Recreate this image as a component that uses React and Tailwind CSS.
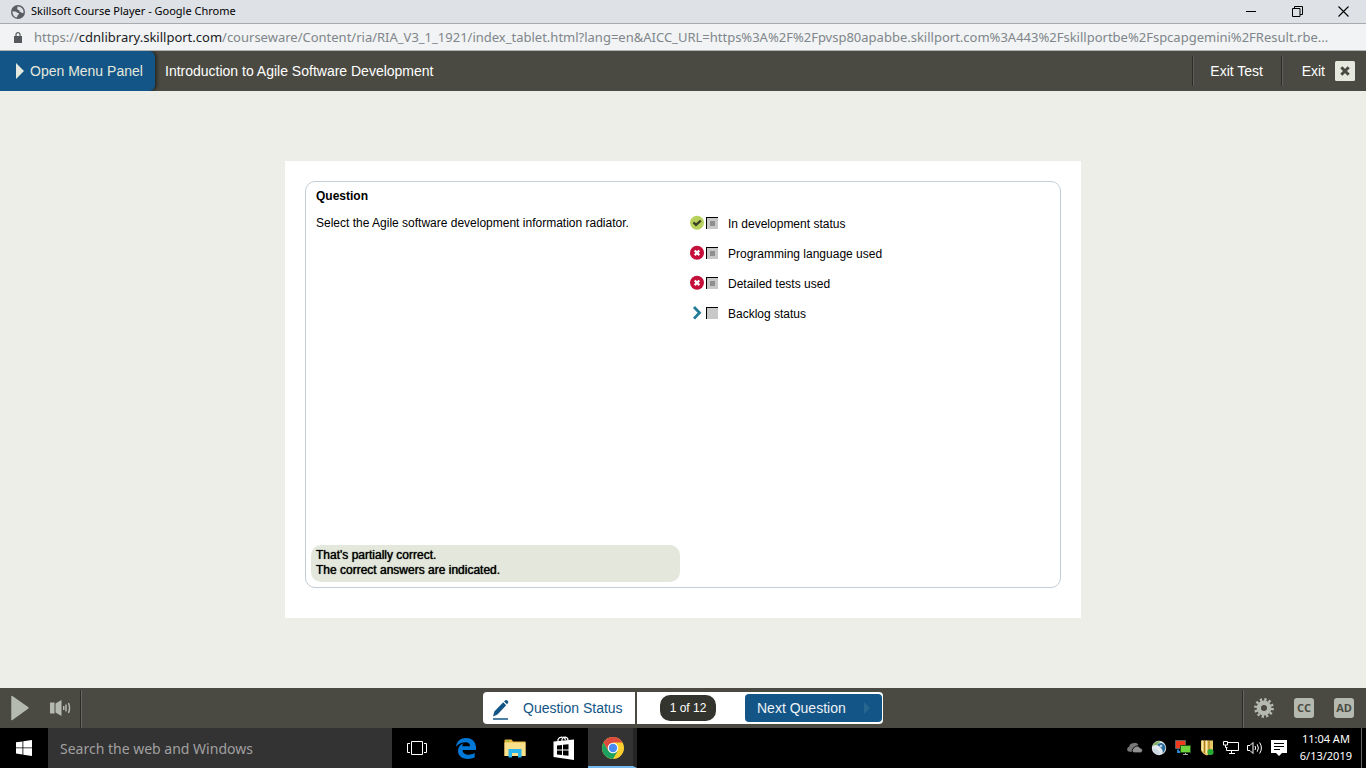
import React from 'react';

const arial = "font-['Liberation_Sans',Arial,sans-serif]";
const segoe = "font-['Noto_Sans','Open_Sans',sans-serif]";

const answers = [
  { id: 'a', label: 'In development status', mark: 'right', checked: true },
  { id: 'b', label: 'Programming language used', mark: 'wrong', checked: true },
  { id: 'c', label: 'Detailed tests used', mark: 'wrong', checked: true },
  { id: 'd', label: 'Backlog status', mark: 'missed', checked: false },
];

function Mark({ kind }) {
  if (kind === 'missed') {
    return (
      <svg className="h-4 w-4 shrink-0" viewBox="0 0 16 16" aria-hidden="true">
        <path d="M5 2 10.500 7.800 5 13.600" fill="none" stroke="#237c98" strokeWidth="2.800" />
      </svg>
    );
  }
  if (kind === 'right') {
    return (
      <svg className="h-4 w-4 shrink-0" viewBox="0 0 16 16" aria-hidden="true">
        <circle cx="8" cy="7.800" r="7" fill="#b7d25c" />
        <path d="M4.400 7.400 7 9.900 11.800 5.700" fill="none" stroke="#3a3f26" strokeWidth="2.300" />
      </svg>
    );
  }
  return (
    <svg className="h-4 w-4 shrink-0" viewBox="0 0 16 16" aria-hidden="true">
      <circle cx="8" cy="7.800" r="7" fill="#c4103a" />
      <path d="M5.700 5.500l4.600 4.600M10.300 5.500l-4.600 4.600" stroke="#fff" strokeWidth="2.300" />
    </svg>
  );
}

function BrowserChrome() {
  return (
    <header className={`${segoe} shrink-0`}>
      <div className="flex h-6 items-center border-b border-[#a9abae] bg-[#dee1e6] pl-[11px] text-black">
        <svg className="mr-1.5 h-3.5 w-3.5" viewBox="0 0 14 14" aria-hidden="true">
          <circle cx="7" cy="7" r="7" fill="#5a5d61" />
          <path d="M1.500 6.200c1.800.3 3.300 0 4.300 1 .7.900 1.800.5 2.300 1.300.2 1-1 1-1.400 1.800-.3.900-.4 1.600-1.200 2.200C3.200 12 1.300 9.600 1.500 6.200z" fill="#dee1e6" />
          <path d="M6.300 1.500c2.800-.2 5 1.400 6.100 3.900.2 1.300.1 2-.3 2.900-1.200-.1-1.600-1-2.700-1.200-1.200 0-1.300-1-.7-1.500-.5-.7-2.200-.4-2.500-1.500-.1-.9.700-1.600.1-2.600z" fill="#dee1e6" />
        </svg>
        <h1 className="flex-1 text-[11px]">Skillsoft Course Player - Google Chrome</h1>
        <button type="button" aria-label="Minimize" className="flex h-5 w-[46px] items-center justify-center">
          <svg className="h-[11px] w-[11px]" viewBox="0 0 11 11"><path d="M0 5.500h10" stroke="#000" /></svg>
        </button>
        <button type="button" aria-label="Restore" className="flex h-5 w-[46px] items-center justify-center">
          <svg className="h-[11px] w-[11px]" viewBox="0 0 11 11"><path d="M.5 2.500h7.500v8H.5zM2.500 2.500v-2h8v8H8" fill="none" stroke="#000" /></svg>
        </button>
        <button type="button" aria-label="Close" className="flex h-5 w-[46px] items-center justify-center">
          <svg className="h-[11px] w-[11px]" viewBox="0 0 11 11"><path d="M.5.5l10 10M10.500.5l-10 10" stroke="#000" strokeWidth="1.100" /></svg>
        </button>
      </div>
      <div className="flex h-[27px] items-center border-b border-[#b1b2b4] bg-[#f1f3f4] pl-3.5">
        <svg className="mr-3 h-[11px] w-2 shrink-0" viewBox="0 0 8 11" aria-hidden="true">
          <path d="M0 4h8v7H0z" fill="#55585c" />
          <path d="M2 4.500V2.600a2 2 0 0 1 4 0v1.900" fill="none" stroke="#55585c" strokeWidth="1.200" />
        </svg>
        <p className="mr-4 min-w-0 overflow-hidden pt-0.5 text-[13px] whitespace-nowrap text-[#80868b]">
          https://<span className="text-[#202124]">cdnlibrary.skillport.com</span>/courseware/Content/ria/RIA_V3_1_1921/index_tablet.html?lang=en&amp;AICC_URL=https%3A%2F%2Fpvsp80apabbe.skillport.com%3A443%2Fskillportbe%2Fspcapgemini%2FResult.rbe...
        </p>
      </div>
    </header>
  );
}

function CourseHeader() {
  return (
    <nav className="flex h-10 shrink-0 items-stretch overflow-hidden bg-[#4a4a42] text-sm text-white">
      <button type="button" className="flex w-[155px] items-center gap-1.5 rounded-r-md bg-[#135587] pl-4 text-[#e5e8dc] shadow-[2px_0_3px_#2a2a26]">
        <svg className="h-4 w-2" viewBox="0 0 8 16" aria-hidden="true"><path d="M0 0l8 8-8 8z" fill="#e5e8dc" /></svg>
        Open Menu Panel
      </button>
      <h2 className="flex flex-1 items-center pl-2.5">Introduction to Agile Software Development</h2>
      <div className="my-[5px] flex items-stretch">
        <button type="button" className="w-[89px] border-l border-[#2e2e29] shadow-[inset_1px_0_#5f5f58]">Exit Test</button>
        <button type="button" className="flex items-center gap-2.5 border-l border-[#2e2e29] pr-[11px] pl-5 shadow-[inset_1px_0_#5f5f58]">
          Exit
          <svg className="h-5 w-5" viewBox="0 0 20 20" aria-hidden="true">
            <rect width="20" height="20" rx="1.500" fill="#e5e8dc" />
            <path d="M6.300 6.300l7.400 7.400M13.700 6.300l-7.400 7.400" stroke="#4a4a42" strokeWidth="3" />
          </svg>
        </button>
      </div>
    </nav>
  );
}

function QuestionCard() {
  return (
    <section className="flex min-h-[457px] w-full max-w-[796px] flex-col bg-white px-5 pt-5 pb-[30px] text-xs text-black">
      <div className="flex flex-1 flex-col rounded-[10px] border border-[#c3cdd6] px-[5px] pt-[7px] pb-[5px]">
        <h3 className="px-[5px] leading-[15px] font-bold">Question</h3>
        <div className="grid flex-1 grid-cols-2 px-[5px] pt-[11px]">
          <p className="leading-4">Select the Agile software development information radiator.</p>
          <ul className="flex flex-col gap-3.5 pl-1.5">
            {answers.map((a) => (
              <li key={a.id} className="flex h-4 items-center">
                <Mark kind={a.mark} />
                <input
                  id={a.id}
                  type="checkbox"
                  defaultChecked={a.checked}
                  disabled
                  className="ml-px h-3 w-3 shrink-0 appearance-none border-t border-l border-black bg-[#c8c8c8] shadow-[inset_0_0_0_3px_#c8c8c8] checked:bg-[#8f8f8f]"
                />
                <label htmlFor={a.id} className="pt-0.5 pl-2.5">{a.label}</label>
              </li>
            ))}
          </ul>
        </div>
        <div className="w-[369px] max-w-full rounded-[10px] bg-[#e4e7dc] px-[5px] pt-[3px] pb-1 leading-[15px] [text-shadow:0_0_1px_#000]">
          <p>That's partially correct.</p>
          <p>The correct answers are indicated.</p>
        </div>
      </div>
    </section>
  );
}

function PlayerBar() {
  return (
    <div className="grid h-10 shrink-0 grid-cols-[1fr_auto_1fr] items-stretch bg-[#4a4a42] text-sm">
      <div className="flex">
        <div className="mt-0.5 flex w-[82px] items-center justify-between border-r border-[#65655e] px-2.5 pb-0.5 shadow-[inset_-1px_0_#2e2e29]">
          <button type="button" aria-label="Play">
            <svg className="h-[26px] w-5" viewBox="0 0 20 26"><path d="M2 1.500l16 11.300L2 24.500z" fill="#b5bab0" stroke="#b5bab0" strokeWidth="1.500" strokeLinejoin="round" /></svg>
          </button>
          <button type="button" aria-label="Volume">
            <svg className="h-[18px] w-[22px]" viewBox="0 0 22 18">
              <path d="M1 3.500h4.500v11H1zM6.500 4.500L12.500 1v16l-6-3.500z" fill="#b5bab0" />
              <path d="M14.700 7v4M17 5.500v7M19.500 4q2 5 0 10" fill="none" stroke="#b5bab0" strokeWidth="1.500" />
            </svg>
          </button>
        </div>
      </div>
      <div className="my-1 flex gap-0.5">
        <button type="button" className="flex w-[152px] items-center rounded-l bg-white pl-2 text-[#135587]">
          <svg className="mr-3.5 h-6 w-[18px]" viewBox="0 0 18 24" aria-hidden="true">
            <path d="M2 20.600l1.300-5L12.200 6.300l3 2.900L6.500 18.500zM13 5.500l1.300-1.300q1-.7 2 .2l.7.700q.8 1 0 1.800L16 8.300z" fill="#135587" />
            <path d="M2 23h15" stroke="#135587" strokeWidth="1.500" />
          </svg>
          Question Status
        </button>
        <div className="flex items-center rounded-r bg-white pr-px pl-[23px]">
          <span className="mr-[29px] flex h-[26px] w-14 items-center justify-center rounded-[10px] bg-[#33342d] text-xs text-white">1 of 12</span>
          <button type="button" className="flex h-7 w-[137px] items-center justify-between rounded bg-[#135587] px-3 text-[#eef2f4]">
            Next Question
            <svg className="h-3 w-1.5" viewBox="0 0 6 12" aria-hidden="true"><path d="M0 0l6 6-6 6z" fill="#28658f" /></svg>
          </button>
        </div>
      </div>
      <div className="flex justify-end">
        <div className="mt-0.5 flex items-center gap-5 border-l border-[#2e2e29] pr-3 pb-0.5 pl-[11px] shadow-[inset_1px_0_#65655e]">
          <button type="button" aria-label="Settings">
            <svg className="h-5 w-5" viewBox="0 0 20 20">
              <circle cx="10" cy="10" r="5.200" fill="none" stroke="#b5bab0" strokeWidth="4.400" />
              <circle cx="10" cy="10" r="8.500" fill="none" stroke="#b5bab0" strokeWidth="2.800" strokeDasharray="2.300 2.150" />
            </svg>
          </button>
          {['CC', 'AD'].map((t) => (
            <button key={t} type="button" className="flex h-5 w-5 items-center justify-center rounded-[3px] bg-[#b5bab0] font-['Open_Sans',sans-serif] text-[11px] font-bold text-[#4a4a42]">
              {t}
            </button>
          ))}
        </div>
      </div>
    </div>
  );
}

function Taskbar() {
  const app = 'flex w-[49px] items-center justify-center';
  return (
    <footer className={`${segoe} flex h-10 shrink-0 items-stretch bg-black text-white`}>
      <button type="button" aria-label="Start" className="flex w-12 items-center justify-center">
        <svg className="h-4 w-4" viewBox="0 0 16 16"><path d="M0 2.300l6.500-.9v6.100H0zM7.300 1.300L16 0v7.500H7.300zM0 8.300h6.500v6.200L0 13.600zM7.300 8.300H16V16l-8.700-1.300z" fill="#fff" /></svg>
      </button>
      <div className="flex w-[344px] bg-[#333]">
        <input type="text" aria-label="Search the web and Windows" placeholder="Search the web and Windows" className="w-full px-3 pt-0.5 text-sm outline-none placeholder:text-[#a0a0a0]" />
      </div>
      <button type="button" aria-label="Task view" className={app}>
        <svg className="h-4 w-5" viewBox="0 0 20 16"><path d="M4.500 1.500h11v13h-11zM3 3.500H.5v9H3M17 3.500h2.500v9H17" fill="none" stroke="#fff" /></svg>
      </button>
      <button type="button" aria-label="Edge" className={app}>
        <svg className="h-[22px] w-[22px]" viewBox="0 0 22 22"><path d="M1 9.600C1.700 4.200 5.700 1 11.100 1 17.500 1 21 5.400 21 10.700V13H7.500c.1 3.200 3 4.700 6.200 4.700 2.300 0 4.200-.6 6-1.600v4.200c-2 1-4.200 1.600-6.900 1.600C7.100 21.900 3 18.800 3 14c0-3.600 2-6.400 5.400-7.800C7.600 7.100 7.300 8.200 7.200 9.300h7.800c0-2.600-1.400-4.100-4.300-4.100C7 5.200 3.400 6.500 1 9.600z" fill="#0078d7" /></svg>
      </button>
      <button type="button" aria-label="File Explorer" className={app}>
        <svg className="h-5 w-[22px]" viewBox="0 0 22 20">
          <path d="M.5 2.500Q.5 1.500 1.500 1.500h6l1.500 2h12.500V18H.5z" fill="#e8b73d" />
          <path d="M.5 4.500h21V18H.5z" fill="#fbe08b" />
          <path d="M2 3h3" stroke="#6fc04a" />
          <path d="M4.500 19.500V11h13v8.500H14V15H8v4.500z" fill="#29b6ef" />
        </svg>
      </button>
      <button type="button" aria-label="Store" className={app}>
        <svg className="h-6 w-[22px]" viewBox="0 0 22 24">
          <path d="M.5 5.500L21 3.500v20.500L.5 21z" fill="#fff" />
          <path d="M5 6V3.500Q6 1 9 1.200q3 0 3.500 2.600M9 5V3q1-2 3.500-1.800Q15 1.500 15 4.500" fill="none" stroke="#fff" strokeWidth="1.200" />
          <path d="M4 9.500l5-.6v4.600H4zM10 8.800l5.500-.6v5.300H10zM4 14.500h5v4.600l-5-.6zM10 14.500h5.500v5.300l-5.500-.6z" fill="#000" />
        </svg>
      </button>
      <button type="button" aria-label="Chrome" className="flex w-[49px] items-center justify-center border-r-4 border-b-2 border-r-[#252525] border-b-[#76b9ed] bg-[#333] pt-0.5 pl-1">
        <svg className="h-[22px] w-[22px]" viewBox="0 0 22 22">
          <circle cx="11" cy="11" r="11" fill="#fccf30" />
          <path d="M1.500 5.500A11 11 0 0 1 20.500 5.500H11L6.200 13.700z" fill="#dd4b3e" />
          <path d="M1.500 5.500L6.200 13.700 11 16l4.800-2.300L11 22A11 11 0 0 1 1.500 5.500z" fill="#1da160" />
          <circle cx="11" cy="11" r="5.300" fill="#fff" />
          <circle cx="11" cy="11" r="4.200" fill="#4a8af4" />
        </svg>
      </button>
      <div className="ml-auto flex items-center">
        <div className="flex items-center gap-2 pr-[13px]">
          <svg className="h-4 w-4" viewBox="0 0 16 16" aria-label="Cloud" role="img">
            <path d="M1.500 11.500A2.500 2.500 0 0 1 2.200 6.800 3.800 3.800 0 0 1 6 3.300 4.500 4.500 0 0 1 11.500 5L6 8 4.500 12z" fill="#777" />
            <path d="M7 12.800a2.400 2.400 0 0 1-.3-4.600 3.500 3.500 0 0 1 6.300-.3 2.500 2.500 0 0 1 .7 4.900z" fill="#909090" stroke="#000" strokeWidth=".7" />
          </svg>
          <svg className="h-4 w-4" viewBox="0 0 16 16" aria-label="Network client" role="img">
            <circle cx="8" cy="8" r="7.200" fill="#e3e9ec" />
            <path d="M1.500 6A7 7 0 0 1 10 1.500Q7 3 6 5 3.500 5 1.500 6z" fill="#7fae63" />
            <path d="M6 5Q8 2.500 10.500 3q3.500 1 4 5-.5 3.500-3 5.500.8-3-1-5Q9 6 6 5z" fill="#2b6b9c" />
            <path d="M2 9q4-1 7 4.500L7 15Q3 14 2 9z" fill="#c9d9e3" />
            <circle cx="10" cy="6" r="1.300" fill="#b9d7e8" />
          </svg>
          <svg className="h-4 w-4" viewBox="0 0 16 16" aria-label="Displays" role="img">
            <path d="M.5.5h10v8H.5z" fill="#f03a1c" stroke="#63605e" />
            <path d="M5.500 5.500h10v7h-10z" fill="#6fd43e" stroke="#235a17" />
            <path d="M8 14.500h5M10.500 13v1.500" stroke="#aaa" />
            <path d="M3 9.500v2.500h2" fill="none" stroke="#2c8bd9" strokeWidth="1.800" />
          </svg>
          <svg className="h-4 w-4" viewBox="0 0 16 16" aria-label="Security" role="img">
            <path d="M2 .5h12V10q-2 4-6 5.500-5-2-6-5.500z" fill="#e9c765" />
            <path d="M5.500.5V13M10 .5v12" stroke="#a27b24" strokeWidth="1.200" />
            <path d="M7.500.5v13M3.500.5V11" stroke="#fbe8ac" strokeWidth="1.300" />
            <circle cx="11.500" cy="12" r="3.100" fill="#29ab35" />
          </svg>
          <svg className="h-4 w-4" viewBox="0 0 16 16" aria-label="Network" role="img">
            <path d="M5 2.500h10.500v8H3.500V8M8.500 10.500v3M6 13.500h6M.5 1.500h4v3.500h-4zM2.500 5v2.500h2" fill="none" stroke="#fff" />
          </svg>
          <svg className="h-4 w-4" viewBox="0 0 16 16" aria-label="Sound" role="img">
            <path d="M.5 5.500h2.500L6 2.500v11L3 10.500H.5zM8 6q1.300 2 0 4M10.200 4.300q2.400 3.700 0 7.400M12.600 2.500q3.600 5.500 0 11" fill="none" stroke="#fff" />
          </svg>
          <svg className="h-4 w-4" viewBox="0 0 16 16" aria-label="Notifications" role="img">
            <path d="M0 0h16v13H11l-3 3-3-3H0z" fill="#fff" />
            <path d="M3 3.500h10M3 6.500h10M3 9.500h6" stroke="#000" />
          </svg>
        </div>
        <time className="pr-[9px] pb-0.5 text-center text-[11px] leading-[17px]">11:04 AM<br />6/13/2019</time>
        <span className="h-10 w-[5px] border-l border-[#666]" />
      </div>
    </footer>
  );
}

export default function App() {
  return (
    <div className={`${arial} flex min-h-screen flex-col bg-[#edeee8]`}>
      <BrowserChrome />
      <CourseHeader />
      <main className="flex flex-1 items-center justify-center">
        <QuestionCard />
      </main>
      <PlayerBar />
      <Taskbar />
    </div>
  );
}
